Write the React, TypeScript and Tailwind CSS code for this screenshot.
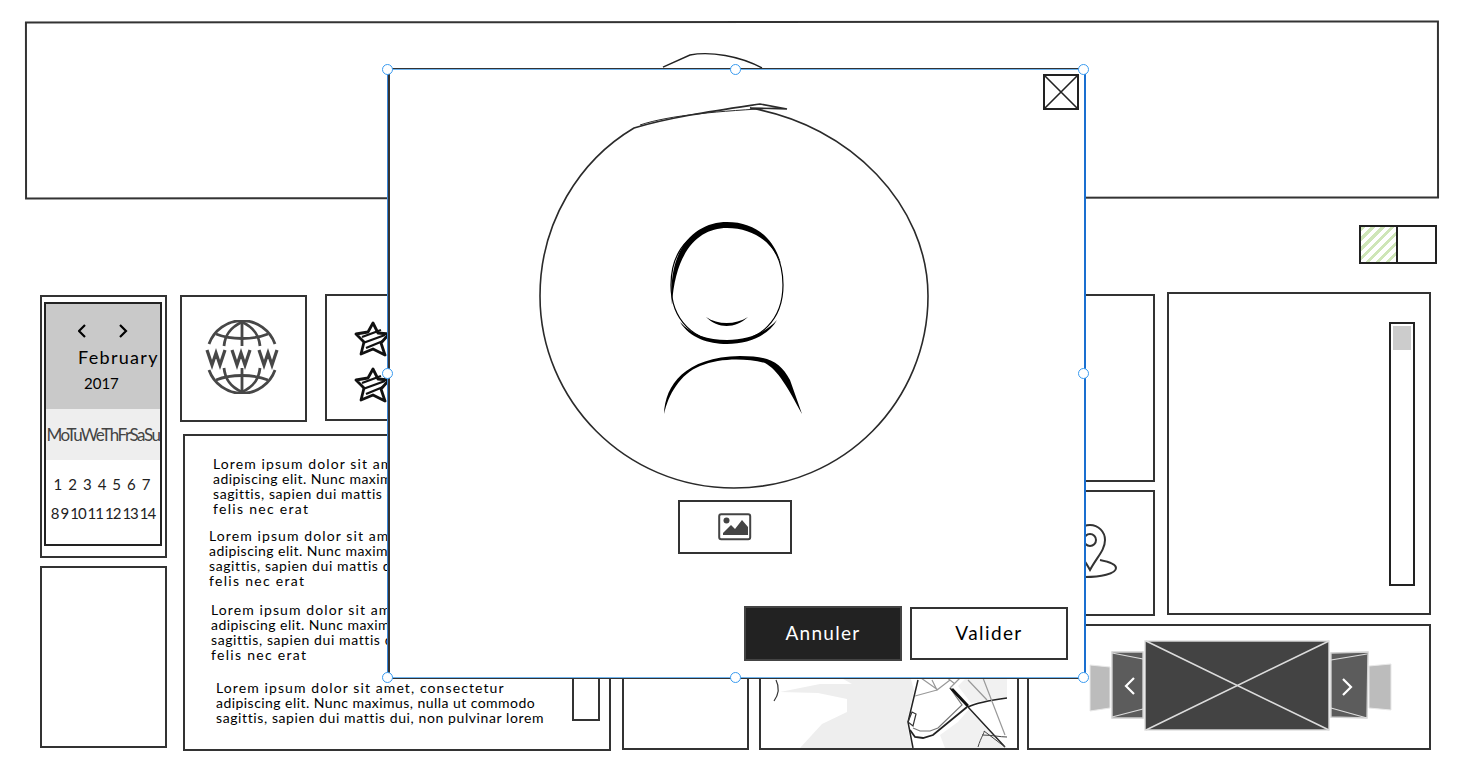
import React from "react";

const Lorem = ({ className }: { className: string }) => (
  <div className={`whitespace-nowrap text-[14px] leading-[15px] text-black ${className}`}>
    <div className="tracking-[1.1px]">Lorem ipsum dolor sit amet, consectetur</div>
    <div className="tracking-[0.45px]">adipiscing elit. Nunc maximus, nulla ut commodo</div>
    <div className="tracking-[0.6px]">sagittis, sapien dui mattis dui, non pulvinar lorem</div>
    <div className="tracking-[1.3px]">felis nec erat</div>
  </div>
);

const Handle = ({ className }: { className: string }) => (
  <div className={`absolute z-30 h-[11px] w-[11px] rounded-full border border-[#3a9bf0] bg-white ${className}`} />
);

const Star = () => (
  <svg width="36" height="38" viewBox="0 0 36 38" fill="none" stroke="#111" strokeWidth="2.8" strokeLinejoin="round">
    <path d="M19 3 L24 13 L35 14 L27 23 L31 35 L19 29 L7 34 L10 22 L2 14 L14 12 Z" />
    <path d="M8 17 L27 10 M9 23 L31 15 M12 28 L29 21" strokeWidth="2.2" />
  </svg>
);

function GlobeIcon() {
  return (
    <svg width="74" height="74" viewBox="0 0 74 74" fill="none" stroke="#474747" strokeWidth="2.8">
      <path d="M4 24 A35 35 0 0 1 70 24" />
      <path d="M4 50 A35 35 0 0 0 70 50" />
      <path d="M37 2 V26 M37 48 V72" />
      <path d="M37 2 C24 8 20 16 19 26 M37 2 C50 8 54 16 55 26" />
      <path d="M19 48 C20 58 24 66 37 72 M55 48 C54 58 50 66 37 72" />
      <path d="M11 14 C26 20 48 20 63 14 M11 60 C26 54 48 54 63 60" />
      <path d="M2 30 L7 45 L11 33 L15 45 L20 30 M27 30 L32 45 L36 33 L40 45 L45 30 M54 30 L59 45 L63 33 L67 45 L72 30" strokeWidth="3.2" />
    </svg>
  );
}

function MapArt() {
  return (
    <svg width="247" height="72" viewBox="761 676 247 72" fill="none">
      <path d="M780 692 L818 693 L847 699 L847 712 L822 724 L800 748 L913 748 L909 735 L907 722 L914 690 L910 676 L838 676 L852 684 L820 684 Z" fill="#eeeeee" />
      <path d="M971 703 L1007 698 L1007 676 L968 676 L958 686 Z" fill="#f1f1f1" />
      <path d="M958 722 L970 708 L1007 748 L945 748 L940 735 Z" fill="#f1f1f1" />
      <path d="M776 680 C780 688 779 694 774 701" stroke="#333" strokeWidth="1.2" />
      <path d="M913 728 L920 731 L930 731 L938 728 L962 705 L950 688" stroke="#777" strokeWidth="1.2" />
      <path d="M918 680 L908 722 L913 748" stroke="#222" strokeWidth="1.5" />
      <path d="M908 722 L912 712 L916 714 L913 726 L908 722" stroke="#333" strokeWidth="1.2" />
      <path d="M910 730 L915 737 L923 738 L933 735 L967 707" stroke="#222" strokeWidth="1.8" />
      <path d="M950 688 L968 707 L1005 747" stroke="#222" strokeWidth="1.4" />
      <path d="M952 689 L968 706" stroke="#111" strokeWidth="2.6" />
      <path d="M968 707 C978 702 992 700 1007 698" stroke="#222" strokeWidth="1.4" />
      <path d="M932 680 L937 690 L950 680 M950 688 L960 678 M945 676 L955 684 M983 678 L1005 735 M968 680 L987 700 M921 678 L938 690 M915 696 L937 690" stroke="#999" strokeWidth="1.2" />
      <path d="M978 747 C981 737 985 732 984 731 L1005 747 M982 735 C992 735 1000 737 1007 737" stroke="#444" strokeWidth="1" />
    </svg>
  );
}

function Carousel() {
  return (
    <svg width="312" height="100" viewBox="1085 636 312 100" fill="none">
      <path d="M1090 665 L1110 667 L1110 708 L1090 711 Z" fill="#bcbcbc" stroke="#e8e8e8" />
      <path d="M1369 666 L1391 664 L1391 710 L1369 708 Z" fill="#bcbcbc" stroke="#e8e8e8" />
      <path d="M1112 652 L1143 652 L1143 718 L1112 718 Z" fill="#5c5c5c" stroke="#d0d0d0" strokeWidth="1.4" />
      <path d="M1112 653 L1143 659 M1112 717 L1143 709" stroke="#dcdcdc" strokeWidth="1.2" />
      <path d="M1331 653 L1368 652 L1367 718 L1331 717 Z" fill="#5c5c5c" stroke="#d0d0d0" strokeWidth="1.4" />
      <path d="M1331 660 L1367 654 M1331 708 L1367 718" stroke="#dcdcdc" strokeWidth="1.2" />
      <rect x="1145" y="641" width="184" height="89" fill="#434343" stroke="#dedede" strokeWidth="1.4" />
      <path d="M1146 641 L1329 730 M1329 641 L1146 730" stroke="#dcdcdc" strokeWidth="1.6" />
      <path d="M1134 678 L1126 686 L1134 694" stroke="#fff" strokeWidth="2.2" />
      <path d="M1343 679 L1351 687 L1343 695" stroke="#fff" strokeWidth="2.2" />
    </svg>
  );
}

function Person() {
  return (
    <svg width="410" height="405" viewBox="530 95 410 405" fill="none">
      <path d="M634 128 C670 117 720 110 760 104 L787 109 L750 108 C850 125 928 205 928 296 C928 400 845 488 734 488 C625 488 540 400 540 296 C540 222 580 160 634 128 Z" stroke="#2a2a2a" strokeWidth="1.6" />
      <path d="M640 125 C670 115 720 111 776 108" stroke="#2a2a2a" strokeWidth="1" />
      <path d="M727 225 C757 225 783 246 783 285 C783 320 760 342 727 342 C694 342 671 320 671 285 C671 246 697 225 727 225 Z" stroke="#000" strokeWidth="1.2" />
      <path d="M672 305 C667 246 697 222 727 222 C755 222 774 238 781 264 C772 241 752 228 727 228 C698 228 675 252 672 305 Z" fill="#000" />
      <path d="M680 322 C690 338 708 344 727 344 C748 344 768 336 777 320 C765 333 748 340 727 340 C708 340 692 335 680 322 Z" fill="#000" />
      <path d="M706 317 C718 325 735 325 748 317 C735 329 718 329 706 317 Z" fill="#000" />
      <path d="M664 414 C665 385 685 357 740 356 C770 356 780 362 790 380 L802 414 C788 388 778 370 765 363 C745 358 720 358 700 366 C680 374 668 395 664 414 Z" fill="#000" />
    </svg>
  );
}

const box = "border-2 border-[#333] bg-white";

export default function App() {
  return (
    <div className="relative flex h-[768px] w-[1462px] flex-col overflow-hidden bg-white pl-[25px] pt-[21px] font-['Lato','Liberation_Sans',sans-serif]">
      {/* top banner */}
      <div className="flex h-[178px] w-[1414px] shrink-0 -rotate-[0.04deg] border-2 border-[#333] pl-[628px] pt-[25px]">
        <svg width="110" height="24" viewBox="655 48 110 24" fill="none">
          <path d="M663 67 L690 55 C710 51 740 56 762 68" stroke="#222" strokeWidth="1.4" />
        </svg>
      </div>

      {/* toggle */}
      <div className="ml-[1334px] mt-[26px] flex h-[39px] w-[78px] shrink-0 border-2 border-[#222]">
        <div className="h-full w-[37px] border-r-2 border-[#222] bg-[repeating-linear-gradient(135deg,#cfe6b8_0px,#cfe6b8_3px,#ffffff_3px,#ffffff_7px)]" />
      </div>

      {/* main area */}
      <div className="ml-[15px] mt-[28px] flex items-start">
        {/* calendar column */}
        <div className="flex w-[127px] shrink-0 flex-col gap-[8px] pt-[3px]">
          <div className="h-[263px] border-2 border-[#333] pl-[2px] pt-[5px]">
            <div className="flex h-[244px] w-[118px] flex-col overflow-hidden border-2 border-[#222] bg-white">
              <div className="flex h-[105px] shrink-0 flex-col items-start bg-[#c9c9c9] pl-[32px] pt-[20px] text-black">
                <svg width="50" height="14" viewBox="0 0 50 14" fill="none" stroke="#000" strokeWidth="2.2">
                  <path d="M7 1 L1 7 L7 13" />
                  <path d="M42 1 L48 7 L42 13" />
                </svg>
                <span className="mt-[9px] whitespace-nowrap text-[18px] leading-[20px] tracking-[1.3px]">February</span>
                <span className="ml-[6px] mt-[6px] text-[15px] leading-[20px]">2017</span>
              </div>
              <div className="flex h-[51px] shrink-0 items-center justify-center whitespace-nowrap bg-[#eeeeee] text-[17px] tracking-[-1.5px] text-[#444]">
                MoTuWeThFrSaSu
              </div>
              <div className="mt-[14px] flex justify-center gap-[6px] pr-[2px] text-[15px] leading-[20px] text-[#222]">
                {["1", "2", "3", "4", "5", "6", "7"].map((d) => (
                  <span key={d}>{d}</span>
                ))}
              </div>
              <div className="mt-[9px] flex justify-center gap-[2px] whitespace-nowrap text-[15px] leading-[20px] tracking-[-1px] text-[#222]">
                {["8", "9", "10", "11", "12", "13", "14"].map((d) => (
                  <span key={d}>{d}</span>
                ))}
              </div>
            </div>
          </div>
          <div className={`h-[182px] ${box}`} />
        </div>

        {/* icons + text column */}
        <div className="ml-[13px] flex w-[431px] shrink-0 flex-col pt-[2px]">
          <div className="flex items-start gap-[18px]">
            <div className={`flex h-[127px] w-[127px] items-center justify-center pb-[3px] pr-[3px] ${box} mt-[1px]`}>
              <GlobeIcon />
            </div>
            <div className={`flex h-[127px] w-[127px] flex-col gap-[8px] pl-[27px] pt-[24px] ${box}`}>
              <Star />
              <Star />
            </div>
          </div>
          <div className={`relative ml-[3px] mt-[12px] flex h-[317px] w-[428px] flex-col items-start ${box}`}>
            <Lorem className="ml-[28px] mt-[20px]" />
            <Lorem className="ml-[24px] mt-[12px]" />
            <Lorem className="ml-[26px] mt-[14px]" />
            <Lorem className="ml-[31px] mt-[18px] h-[47px] overflow-hidden" />
            <div className="absolute left-[387px] top-[202px] h-[83px] w-[28px] border-2 border-[#333]" />
          </div>
        </div>

        {/* right area */}
        <div className="ml-[11px] flex w-[809px] shrink-0 flex-col gap-[8px]">
          <div className="flex h-[324px] items-start justify-end gap-[12px]">
            <div className="flex w-[125px] flex-col gap-[8px] pt-[2px]">
              <div className={`h-[188px] ${box}`} />
              <div className={`flex h-[126px] items-start pl-[28px] pt-[28px] ${box}`}>
                <svg width="60" height="60" viewBox="0 0 60 60" fill="none" stroke="#333" strokeWidth="2">
                  <path d="M30 50 C23 37 15 30 15 20 A15 15 0 0 1 45 20 C45 30 37 37 30 50 Z" />
                  <circle cx="30" cy="20" r="6" />
                  <path d="M40 40 C50 42 56 45 56 48 C56 54 40 57 25 57" />
                </svg>
              </div>
            </div>
            <div className={`flex h-[323px] w-[264px] justify-end pr-[14px] pt-[28px] ${box}`}>
              <div className="h-[264px] w-[26px] border-2 border-[#222] p-[2px]">
                <div className="h-[24px] w-full bg-[#cccccc]" />
              </div>
            </div>
          </div>
          <div className="flex h-[126px] items-end">
            <div className={`h-[110px] w-[127px] shrink-0 ${box}`} />
            <div className={`ml-[10px] flex h-[110px] w-[260px] shrink-0 items-end ${box}`}>
              <MapArt />
            </div>
            <div className={`ml-[8px] flex h-[126px] w-[404px] shrink-0 pl-[56px] pt-[10px] ${box}`}>
              <Carousel />
            </div>
          </div>
        </div>
      </div>

      {/* modal dialog lying over the canvas */}
      <div className="absolute left-[388px] top-[68px] z-20 flex h-[611px] w-[698px] flex-col border-2 border-r-0 border-[#333] bg-white">
        <div className="flex justify-end pr-[6px] pt-[3px]">
          <svg width="38" height="38" viewBox="0 0 38 38" fill="none" stroke="#222" strokeWidth="2">
            <rect x="2" y="2" width="34" height="34" />
            <path d="M2 2 L36 36 M36 2 L2 36" strokeWidth="1.6" />
          </svg>
        </div>
        <div className="-mt-[16px] ml-[140px]">
          <Person />
        </div>
        <div className={`ml-[288px] flex h-[54px] w-[114px] items-center justify-center ${box}`}>
          <svg width="34" height="28" viewBox="0 0 34 28">
            <rect x="1.2" y="1.2" width="31" height="25" rx="2" fill="#fff" stroke="#444" strokeWidth="2" />
            <circle cx="8.5" cy="7.5" r="3" fill="#444" />
            <path d="M5 22 L5 20 L13 12 L17 16 L24 7 L30 14 L30 22 Z" fill="#444" />
          </svg>
        </div>
        <div className="mt-[52px] flex items-center justify-end gap-[8px] pr-[18px]">
          <div className="flex h-[55px] w-[158px] items-center justify-center border-2 border-[#444] bg-[#222222] text-[19px] tracking-[1.3px] text-white">
            Annuler
          </div>
          <div className="flex h-[53px] w-[158px] items-center justify-center border-2 border-[#333] bg-white text-[19px] tracking-[1.4px] text-black">
            Valider
          </div>
        </div>
      </div>

      {/* selection frame */}
      <div className="absolute left-[1084px] top-[69px] z-20 h-[609px] w-[2px] bg-[#1a6fd0]" />
      <div className="absolute left-[388px] top-[69px] z-20 h-px w-[696px] bg-[#6fb4ee]" />
      <div className="absolute left-[388px] top-[677px] z-20 h-px w-[696px] bg-[#6fb4ee]" />
      <div className="absolute left-[387px] top-[69px] z-20 h-[609px] w-px bg-[#3a86d8]" />

      <Handle className="left-[382px] top-[64px]" />
      <Handle className="left-[730px] top-[64px]" />
      <Handle className="left-[1078px] top-[64px]" />
      <Handle className="left-[382px] top-[368px]" />
      <Handle className="left-[1078px] top-[368px]" />
      <Handle className="left-[382px] top-[672px]" />
      <Handle className="left-[730px] top-[672px]" />
      <Handle className="left-[1078px] top-[672px]" />
    </div>
  );
}
